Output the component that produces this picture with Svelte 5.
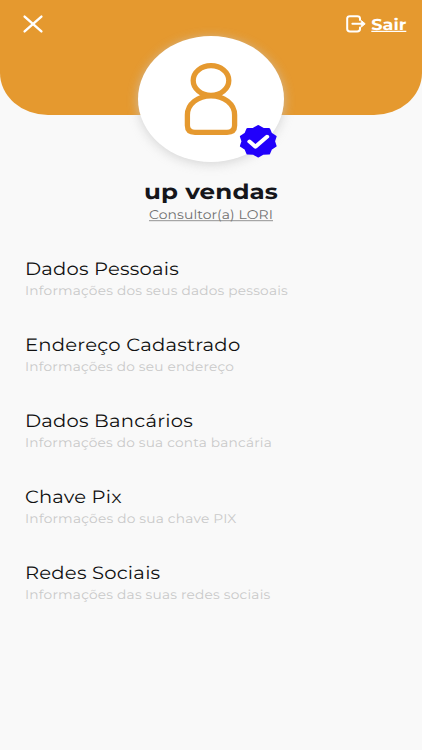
<script>
  const items = [
    { title: 'Dados Pessoais', titleWidth: 154, text: 'Informações dos seus dados pessoais', textWidth: 263 },
    { title: 'Endereço Cadastrado', titleWidth: 215.5, text: 'Informações do seu endereço', textWidth: 209 },
    { title: 'Dados Bancários', titleWidth: 168, text: 'Informações do sua conta bancária', textWidth: 247 },
    { title: 'Chave Pix', titleWidth: 97, text: 'Informações do sua chave PIX', textWidth: 211.5 },
    { title: 'Redes Sociais', titleWidth: 135.5, text: 'Informações das suas redes sociais', textWidth: 245.5 }
  ];

  // ten-toothed seal, drawn inside a 22x22 box
  const seal = Array.from({ length: 20 }, (_, i) => {
    const r = i % 2 ? 8.9 : 10.3;
    const a = (i * Math.PI) / 10;
    return `${(11 + r * Math.sin(a)).toFixed(2)},${(11 - r * Math.cos(a)).toFixed(2)}`;
  }).join(' ');
</script>

<main>
  <header>
    <svg class="close" viewBox="0 0 20 18">
      <path d="M1.6 1.6 18.4 16.4M18.4 1.6 1.6 16.4" />
    </svg>
    <div class="logout">
      <svg class="exit" viewBox="0 0 20 18">
        <path d="M14 5V3.6Q14 1.2 11.2 1.2H4Q1.2 1.2 1.2 3.6V14Q1.2 16.4 4 16.4H11.2Q14 16.4 14 14V12.6" />
        <path d="M6.4 8.8H16" />
        <path class="tip" d="M15.6 5.8 19.2 8.8 15.6 11.8Z" />
      </svg>
      <svg class="sair" viewBox="0 0 36 20">
        <text x="0.3" y="15.5" textLength="35" lengthAdjust="spacingAndGlyphs">Sair</text>
        <path d="M0.3 17.3H35.3" />
      </svg>
    </div>
  </header>

  <section class="profile">
    <div class="avatar">
      <svg class="person" viewBox="0 0 54 74">
        <ellipse cx="27" cy="17.5" rx="17.8" ry="14.9" />
        <path d="M3.4 52C3.4 41 14 32.8 27 32.8S50.6 41 50.6 52V62.5Q50.6 69.3 43 69.3H11Q3.4 69.3 3.4 62.5Z" />
      </svg>
      <svg class="badge" viewBox="0 0 22 22" preserveAspectRatio="none">
        <polygon class="seal" points={seal} />
        <path class="check" d="M6 11.2 9.4 14.7 16 7.9" />
      </svg>
    </div>
    <svg class="name" viewBox="0 0 134 30">
      <text x="0" y="20.7" textLength="134" lengthAdjust="spacingAndGlyphs">up vendas</text>
    </svg>
    <svg class="role" viewBox="0 0 124 16">
      <text x="0" y="11.3" textLength="124" lengthAdjust="spacingAndGlyphs">Consultor(a) LORI</text>
      <path d="M0 12.7H124" />
    </svg>
  </section>

  <ul>
    {#each items as item}
      <li>
        <svg class="title" viewBox="0 0 372 24">
          <text x="-0.1" y="17" textLength={item.titleWidth} lengthAdjust="spacingAndGlyphs">{item.title}</text>
        </svg>
        <svg class="text" viewBox="0 0 372 18">
          <text x="0" y="12.5" textLength={item.textWidth} lengthAdjust="spacingAndGlyphs">{item.text}</text>
        </svg>
      </li>
    {/each}
  </ul>
</main>

<style>
  :global(body) {
    background: #f9f9f9;
  }
  main {
    height: 750px;
    overflow: hidden;
    font-family: Montserrat, Inter, sans-serif;
  }
  svg {
    display: block;
    fill: none;
    overflow: visible;
  }
  text {
    text-rendering: geometricPrecision;
  }
  header {
    box-sizing: border-box;
    height: 115px;
    padding: 14px 15px 0 23px;
    display: flex;
    justify-content: space-between;
    align-items: flex-start;
    background: #e5992f;
    border-radius: 0 0 48px 48px / 0 0 42px 42px;
  }
  .close {
    width: 20px;
    height: 18px;
    margin-top: 1px;
    stroke: #fff;
    stroke-width: 2.4;
    stroke-linecap: round;
  }
  .logout {
    display: flex;
    gap: 5px;
  }
  .exit {
    width: 20px;
    height: 18px;
    margin-top: 1px;
    stroke: #fff;
    stroke-width: 2;
    stroke-linecap: round;
  }
  .tip {
    fill: #fff;
    stroke-width: 1;
    stroke-linejoin: round;
  }
  .sair {
    width: 36px;
    height: 20px;
    stroke: #fff;
    stroke-width: 1.2;
  }
  .sair text {
    fill: #fff;
    stroke: none;
    font-size: 15.7px;
    font-weight: 700;
  }
  .profile {
    display: flex;
    flex-direction: column;
    align-items: center;
    margin-top: -79px;
  }
  .avatar {
    position: relative;
    display: flex;
    justify-content: center;
    width: 146px;
    height: 126px;
    border-radius: 50%;
    background: #fff;
    box-shadow: 0 2px 11px rgba(200, 200, 200, 0.75);
  }
  .person {
    width: 54px;
    height: 74px;
    margin-top: 27px;
    stroke: #e5992f;
    stroke-width: 5.3;
  }
  .badge {
    position: absolute;
    left: 101.3px;
    top: 89px;
    width: 38.5px;
    height: 32.5px;
  }
  .seal {
    fill: #2100fb;
    stroke: #2100fb;
    stroke-width: 1.4;
    stroke-linejoin: round;
  }
  .check {
    stroke: #fff;
    stroke-width: 2.5;
    stroke-linecap: round;
    stroke-linejoin: round;
  }
  .name {
    width: 134px;
    height: 30px;
    margin-top: 16px;
  }
  .name text {
    fill: #15161b;
    font-size: 21px;
    font-weight: 700;
    letter-spacing: 0.1px;
  }
  .role {
    width: 124px;
    height: 16px;
    stroke: #777;
    stroke-width: 0.8;
  }
  .role text {
    fill: #707070;
    stroke: none;
    font-size: 12.7px;
    letter-spacing: 0.1px;
  }
  ul {
    list-style: none;
    margin: 34px 0 0;
    padding: 0 25px;
  }
  li {
    height: 76px;
  }
  .title {
    width: 372px;
    height: 24px;
  }
  .title text {
    fill: #111;
    font-size: 17.8px;
    letter-spacing: 0.2px;
  }
  .text {
    width: 372px;
    height: 18px;
  }
  .text text {
    fill: #c9c9c9;
    font-size: 12.7px;
    letter-spacing: 0.2px;
  }
</style>
